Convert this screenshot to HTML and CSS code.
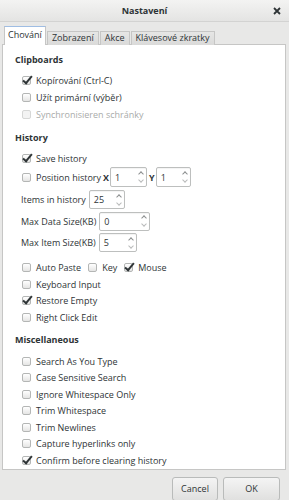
FILE: index.html
```html
<!DOCTYPE html>
<html>
<head>
<meta charset="utf-8">
<link rel="stylesheet" href="styles.css">
</head>
<body>
<div class="win">
  <header class="titlebar">
    <span></span>
    <span class="title">Nastavení</span>
    <span class="close"><svg width="8" height="8" viewBox="0 0 8 8"><path d="M1 1L7 7M7 1L1 7" stroke="#2e3436" stroke-width="1.8"/></svg></span>
  </header>
  <div class="content">
    <nav class="tabs">
      <div class="tab active">Chování</div>
      <div class="tab">Zobrazení</div>
      <div class="tab">Akce</div>
      <div class="tab">Klávesové zkratky</div>
    </nav>
    <section class="panel">
      <h3 class="head">Clipboards</h3>
      <div class="group clip">
        <div class="row"><span class="cb on"></span>Kopírování (Ctrl-C)</div>
        <div class="row"><span class="cb"></span>Užít primární (výběr)</div>
        <div class="row dis"><span class="cb"></span>Synchronisieren schránky</div>
      </div>

      <h3 class="head hist">History</h3>
      <div class="group">
        <div class="row"><span class="cb on"></span>Save history</div>
        <div class="row spinrow"><span class="cb"></span>Position history <b class="axis">X</b><span class="spin w37"><span class="val">1</span><span class="arrows"><i class="up"></i><i class="dn"></i></span></span><b class="axis">Y</b><span class="spin w35"><span class="val">1</span><span class="arrows"><i class="up"></i><i class="dn"></i></span></span></div>
      </div>
      <div class="spins">
        <div class="lrow">Items in history<span class="spin w36"><span class="val">25</span><span class="arrows"><i class="up"></i><i class="dn"></i></span></span></div>
        <div class="lrow">Max Data Size(KB)<span class="spin w51"><span class="val">0</span><span class="arrows"><i class="up"></i><i class="dn"></i></span></span></div>
        <div class="lrow">Max Item Size(KB)<span class="spin w38"><span class="val">5</span><span class="arrows"><i class="up"></i><i class="dn"></i></span></span></div>
      </div>
      <div class="group after">
        <div class="row r165"><span class="cb"></span>Auto Paste<span class="cb sp"></span>Key<span class="cb on sp"></span>Mouse</div>
        <div class="row r165"><span class="cb"></span>Keyboard Input</div>
        <div class="row r165"><span class="cb on"></span>Restore Empty</div>
        <div class="row r165"><span class="cb"></span>Right Click Edit</div>
      </div>

      <h3 class="head misc">Miscellaneous</h3>
      <div class="group mgroup">
        <div class="row r165"><span class="cb"></span>Search As You Type</div>
        <div class="row r165"><span class="cb"></span>Case Sensitive Search</div>
        <div class="row r165"><span class="cb"></span>Ignore Whitespace Only</div>
        <div class="row r165"><span class="cb"></span>Trim Whitespace</div>
        <div class="row r165"><span class="cb"></span>Trim Newlines</div>
        <div class="row r165"><span class="cb"></span>Capture hyperlinks only</div>
        <div class="row r165"><span class="cb on"></span>Confirm before clearing history</div>
      </div>
    </section>
    <footer class="actions">
      <button class="btn cancel">Cancel</button>
      <button class="btn ok">OK</button>
    </footer>
  </div>
</div>
</body>
</html>
```

FILE: styles.css
```css
* { box-sizing: border-box; }
html, body { margin: 0; padding: 0; }
body {
  width: 289px;
  height: 500px;
  overflow: hidden;
  background: #e8e8e7;
  font-family: "Open Sans", "DejaVu Sans", sans-serif;
  font-size: 9px;
  color: #2e3436;
}
.win {
  height: 500px;
  display: flex;
  flex-direction: column;
}
.titlebar {
  height: 22px;
  flex: none;
  display: grid;
  grid-template-columns: 1fr auto 1fr;
  align-items: center;
  background: linear-gradient(#f3f3f2, #e4e4e3);
  border-bottom: 1px solid #d3d3d2;
}
.title { font-weight: 700; font-size: 9px; }
.close { justify-self: end; margin-right: 8px; display: flex; }
.content {
  flex: 1;
  display: flex;
  flex-direction: column;
  padding: 0 3px 3px 2px;
}
.tabs {
  height: 22px;
  flex: none;
  display: flex;
  align-items: flex-end;
  padding-left: 2px;
  gap: 1px;
}
.tab {
  height: 14px;
  line-height: 12px;
  padding: 0 4px;
  border: 1px solid #c6c6c5;
  border-bottom: none;
  background: linear-gradient(#e6e6e5, #dadad9);
  color: #2e3436;
  position: relative;
  top: 1px;
}
.tab.active {
  height: 19px;
  line-height: 16px;
  background: #fff;
  border-color: #c6c6c5;
  border-top: 1px solid #9fbde3;
  z-index: 1;
  padding: 0 3px;
}
.panel {
  flex: 1;
  background: #fff;
  border: 1px solid #c6c6c5;
  padding: 7px 0 0 12px;
  display: flex;
  flex-direction: column;
}
.head {
  margin: 0;
  font-size: 9px;
  font-weight: 700;
  line-height: 16px;
  height: 16px;
}
.group { padding-left: 7px; display: flex; flex-direction: column; }
.clip { margin-top: 3.5px; }
.hist { margin-top: 7px; }
.hist + .group { margin-top: 4px; }
.row {
  height: 17px;
  display: flex;
  align-items: center;
  white-space: nowrap;
}
.r165 { height: 16.5px; }
.row.dis { color: #a9abaa; }
.cb {
  width: 9px;
  height: 9px;
  flex: none;
  margin-right: 5px;
  border: 1px solid #b4b6b5;
  border-radius: 2px;
  background: linear-gradient(#ffffff, #e5e5e4);
  position: relative;
}
.dis .cb { border-color: #d6d7d6; background: #f3f3f3; }
.cb.sp { margin-left: 7px; }
.cb.on::after {
  content: "";
  position: absolute;
  left: 2px;
  top: -3px;
  width: 3px;
  height: 8px;
  border-right: 2px solid #2e3436;
  border-bottom: 2px solid #2e3436;
  transform: rotate(40deg);
}
.spinrow { height: 20px; margin-top: 0.5px; }
.axis { font-weight: 700; margin: 0 1px 0 2px; }
.spin {
  height: 20px;
  display: flex;
  align-items: center;
  justify-content: space-between;
  border: 1px solid #bdbfbe;
  border-radius: 2px;
  background: #fff;
  padding: 0 3px 0 4px;
  box-shadow: inset 0 1px 1px rgba(0,0,0,0.05);
}
.w37 { width: 37px; }
.w35 { width: 35px; }
.w36 { width: 36px; }
.w51 { width: 51px; }
.w38 { width: 38px; }
.arrows {
  display: flex;
  flex-direction: column;
  justify-content: space-between;
  height: 14px;
}
.arrows i {
  display: block;
  width: 4px;
  height: 4px;
  border-left: 1px solid #8b8e8f;
  border-top: 1px solid #8b8e8f;
}
.arrows .up { transform: rotate(45deg); margin-top: 2px; }
.arrows .dn { transform: rotate(225deg); border-color: #b9bbbb; margin-bottom: 2px; }
.spins { padding-left: 6px; display: flex; flex-direction: column; margin-top: 2px; }
.lrow {
  height: 21.5px;
  display: flex;
  align-items: center;
  gap: 3px;
  white-space: nowrap;
}
.lrow .spin { height: 19px; }
.after { margin-top: 6px; }
.misc { margin-top: 6.5px; }
.mgroup { margin-top: 5px; }
.actions {
  flex: none;
  height: 31px;
  padding-top: 7px;
  display: flex;
  justify-content: flex-end;
  gap: 5px;
  padding-right: 6px;
}
.btn {
  height: 24px;
  font-family: inherit;
  font-size: 9px;
  color: #2e3436;
  border: 1px solid #b9bbba;
  border-radius: 3px;
  background: linear-gradient(#f4f4f4, #e0e0df);
  padding: 0;
}
.cancel { width: 46px; }
.ok { width: 57px; }
```
